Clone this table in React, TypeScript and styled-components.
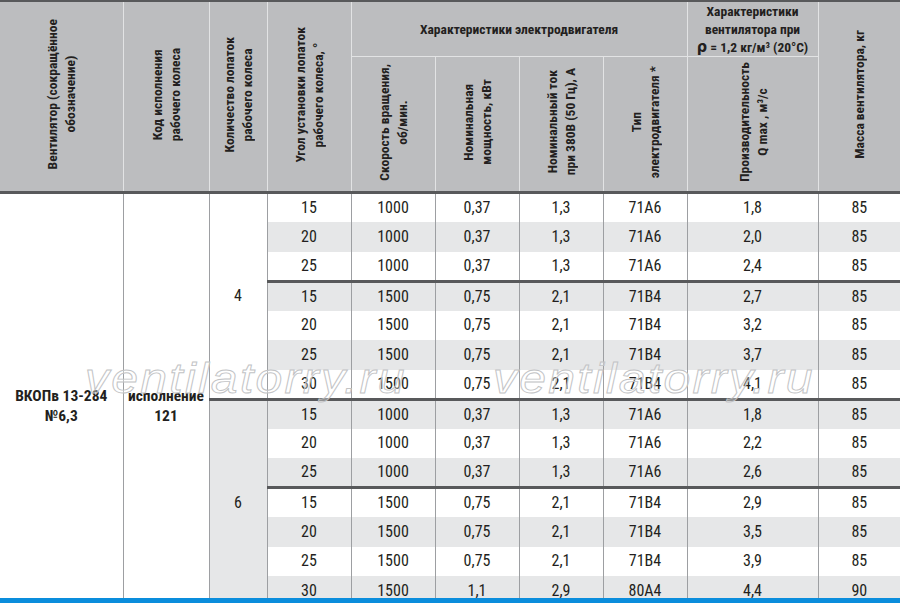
import styled, { createGlobalStyle } from "styled-components";

const GlobalStyle = createGlobalStyle`
  html, body {
    margin: 0;
    padding: 0;
    background: #ffffff;
  }
  body {
    font-family: "Roboto Condensed", "DejaVu Sans Condensed", "Liberation Sans Narrow", "Liberation Sans", Arial, sans-serif;
    font-stretch: condensed;
    color: #231f20;
  }
`;

const Page = styled.div`
  width: 900px;
  height: 603px;
  display: flex;
  flex-direction: column;
  overflow: hidden;
`;

const TableArea = styled.div`
  position: relative;
  flex: 1;
  min-height: 0;
  overflow: hidden;
`;

const BottomBar = styled.div`
  flex-shrink: 0;
  height: 5px;
  background: #0a8ddc;
`;

const Table = styled.table`
  width: 900px;
  table-layout: fixed;
  border-collapse: collapse;
  border-top: 2px solid #58595b;
`;

const HeadRow = styled.tr<{ $h: number }>`
  height: ${({ $h }) => $h}px;
`;

const Th = styled.th<{ $bottom?: boolean }>`
  background: #bcbdbf;
  border-left: 1px solid #e2e3e4;
  border-right: 1px solid #e2e3e4;
  border-bottom: ${({ $bottom }) => ($bottom ? "3px solid #58595b" : "1px solid #e2e3e4")};
  padding: 0;
  font-size: 13.5px;
  font-weight: 700;
  line-height: 18px;
  text-align: center;
  vertical-align: middle;
  color: #231f20;
  overflow: hidden;

  &:first-child {
    border-left: none;
  }
  &:last-child {
    border-right: none;
  }
`;

const Vertical = styled.span`
  display: inline-block;
  writing-mode: vertical-rl;
  transform: rotate(180deg);
  white-space: nowrap;
`;

const Rho = styled.span`
  font-family: "DejaVu Sans", sans-serif;
  font-size: 16px;
  font-weight: 700;
`;

const BodyRow = styled.tr<{ $h: number }>`
  height: ${({ $h }) => $h}px;
`;

const Td = styled.td<{ $shade?: boolean; $sep?: boolean; $bold?: boolean; $top?: boolean }>`
  position: relative;
  z-index: 1;
  padding: 0;
  background: ${({ $shade }) => ($shade ? "#e6e7e8" : "#ffffff")};
  border-left: 1px solid #9d9fa2;
  border-right: 1px solid #9d9fa2;
  border-top: ${({ $sep, $top }) => ($sep || $top ? "3px solid #58595b" : "none")};
  font-size: ${({ $bold }) => ($bold ? "15.5px" : "16px")};
  font-weight: ${({ $bold }) => ($bold ? 700 : 400)};
  line-height: 20px;
  text-align: center;
  vertical-align: middle;
  white-space: nowrap;

  &:first-child {
    border-left: none;
  }
  &:last-child {
    border-right: none;
  }
`;

const SpanLabel = styled.div<{ $shift: number }>`
  padding-top: ${({ $shift }) => $shift}px;
`;

const Watermark = styled.span<{ $left: number }>`
  position: absolute;
  z-index: 2;
  top: 357px;
  left: ${({ $left }) => $left}px;
  font-family: "Liberation Sans", Arial, sans-serif;
  font-stretch: normal;
  font-style: italic;
  font-size: 43px;
  line-height: 43px;
  letter-spacing: 2px;
  color: rgba(255, 255, 255, 0.35);
  -webkit-text-stroke: 0.9px #c2c3c5;
  transform: scaleX(1.12);
  transform-origin: left center;
  pointer-events: none;
  white-space: nowrap;
`;

type Row = [string, string, string, string, string, string, string];

const groups: { blades: string; rows: Row[] }[] = [
  {
    blades: "4",
    rows: [
      ["15", "1000", "0,37", "1,3", "71А6", "1,8", "85"],
      ["20", "1000", "0,37", "1,3", "71А6", "2,0", "85"],
      ["25", "1000", "0,37", "1,3", "71А6", "2,4", "85"],
      ["15", "1500", "0,75", "2,1", "71В4", "2,7", "85"],
      ["20", "1500", "0,75", "2,1", "71В4", "3,2", "85"],
      ["25", "1500", "0,75", "2,1", "71В4", "3,7", "85"],
      ["30", "1500", "0,75", "2,1", "71В4", "4,1", "85"],
    ],
  },
  {
    blades: "6",
    rows: [
      ["15", "1000", "0,37", "1,3", "71А6", "1,8", "85"],
      ["20", "1000", "0,37", "1,3", "71А6", "2,2", "85"],
      ["25", "1000", "0,37", "1,3", "71А6", "2,6", "85"],
      ["15", "1500", "0,75", "2,1", "71В4", "2,9", "85"],
      ["20", "1500", "0,75", "2,1", "71В4", "3,5", "85"],
      ["25", "1500", "0,75", "2,1", "71В4", "3,9", "85"],
      ["30", "1500", "1,1", "2,9", "80А4", "4,4", "90"],
    ],
  },
];

const widths = [123, 86, 58, 84, 84, 84, 84, 84, 131, 82];

function App() {
  let index = 0;
  const total = groups.reduce((n, g) => n + g.rows.length, 0);

  return (
    <Page>
      <GlobalStyle />
      <TableArea>
        <Table>
          <colgroup>
            {widths.map((w, i) => (
              <col key={i} style={{ width: w }} />
            ))}
          </colgroup>
          <thead>
            <HeadRow $h={52}>
              <Th rowSpan={2} $bottom>
                <Vertical>
                  Вентилятор (сокращённое
                  <br />
                  обозначение)
                </Vertical>
              </Th>
              <Th rowSpan={2} $bottom>
                <Vertical>
                  Код исполнения
                  <br />
                  рабочего колеса
                </Vertical>
              </Th>
              <Th rowSpan={2} $bottom>
                <Vertical>
                  Количество лопаток
                  <br />
                  рабочего колеса
                </Vertical>
              </Th>
              <Th rowSpan={2} $bottom>
                <Vertical>
                  Угол установки лопаток
                  <br />
                  рабочего колеса, °
                </Vertical>
              </Th>
              <Th colSpan={4}>Характеристики электродвигателя</Th>
              <Th>
                Характеристики
                <br />
                вентилятора при
                <br />
                <Rho>ρ</Rho> = 1,2 кг/м³ (20°С)
              </Th>
              <Th rowSpan={2} $bottom>
                <Vertical>Масса вентилятора, кг</Vertical>
              </Th>
            </HeadRow>
            <HeadRow $h={136}>
              <Th $bottom>
                <Vertical>
                  Скорость вращения,
                  <br />
                  об/мин.
                </Vertical>
              </Th>
              <Th $bottom>
                <Vertical>
                  Номинальная
                  <br />
                  мощность, кВт
                </Vertical>
              </Th>
              <Th $bottom>
                <Vertical>
                  Номинальный ток
                  <br />
                  при 380В (50 Гц), А
                </Vertical>
              </Th>
              <Th $bottom>
                <Vertical>
                  Тип
                  <br />
                  электродвигателя *
                </Vertical>
              </Th>
              <Th $bottom>
                <Vertical>
                  Производительность
                  <br />
                  Q max , м³/с
                </Vertical>
              </Th>
            </HeadRow>
          </thead>
          <tbody>
            {groups.map((group, gi) =>
              group.rows.map((row, ri) => {
                const i = index++;
                const first = i === 0;
                const shade = i % 2 === 1;
                const groupStart = ri === 0 && gi > 0;
                const subStart = ri === 3;
                return (
                  <BodyRow key={i} $h={29.5}>
                    {first && (
                      <>
                        <Td rowSpan={total} $bold $top>
                          <SpanLabel $shift={13}>
                            ВКОПв 13-284
                            <br />
                            №6,3
                          </SpanLabel>
                        </Td>
                        <Td rowSpan={total} $bold $top>
                          <SpanLabel $shift={13}>
                            исполнение
                            <br />
                            121
                          </SpanLabel>
                        </Td>
                      </>
                    )}
                    {ri === 0 && (
                      <Td rowSpan={group.rows.length} $shade={gi === 1} $sep={groupStart} $top={first}>
                        {group.blades}
                      </Td>
                    )}
                    {row.map((value, ci) => (
                      <Td key={ci} $shade={shade} $sep={groupStart || subStart} $top={first}>
                        {value}
                      </Td>
                    ))}
                  </BodyRow>
                );
              })
            )}
          </tbody>
        </Table>
        <Watermark $left={85}>ventilatorry.ru</Watermark>
        <Watermark $left={493}>ventilatorry.ru</Watermark>
      </TableArea>
      <BottomBar />
    </Page>
  );
}

export default App;
